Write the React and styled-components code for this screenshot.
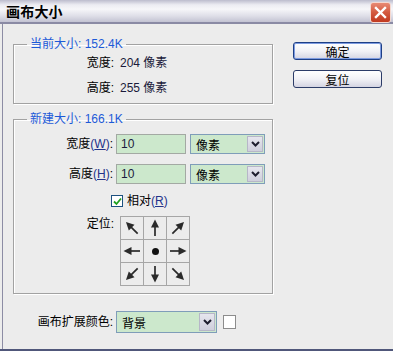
import React from 'react';
import styled, { createGlobalStyle } from 'styled-components';

const Global = createGlobalStyle`
    html, body {
        margin: 0;
        padding: 0;
        background: #ececec;
    }
    body {
        font-family: "Liberation Sans", "Noto Sans CJK SC", sans-serif;
        font-size: 12px;
        color: #000;
    }
`;

function Chevron() {
    return (
        <svg width="9" height="6" viewBox="0 0 9 6">
            <polyline points="1,1 4.5,4.5 8,1" fill="none" stroke="#1e1e2e" strokeWidth="2" />
        </svg>
    );
}

function Select({ width, height, children }) {
    return (
        <SelectBox $width={width} $height={height}>
            <SelectValue>{children}</SelectValue>
            <DropButton><Chevron /></DropButton>
        </SelectBox>
    );
}

function Arrow({ angle }) {
    return (
        <svg width="22" height="22" viewBox="0 0 22 22">
            <g transform={`rotate(${angle} 11 11)`}>
                <line x1="11" y1="19" x2="11" y2="9" stroke="#2a2a2a" strokeWidth="1.7" />
                <polygon points="11,2.5 7,10.5 15,10.5" fill="#2a2a2a" />
            </g>
        </svg>
    );
}

const anchors = [-45, 0, 45, -90, null, 90, -135, 180, 135];

function App() {
    return (
        <>
            <Global />
            <Window>
                <TitleBar>
                    <Title>画布大小</Title>
                    <CloseButton>
                        <svg width="13" height="13" viewBox="0 0 13 13">
                            <path d="M2 2 L11 11 M11 2 L2 11" stroke="#fff" strokeWidth="2.4" strokeLinecap="square" />
                        </svg>
                    </CloseButton>
                </TitleBar>
                <Body>
                    <Main>
                        <Group>
                            <Legend>当前大小: 152.4K</Legend>
                            <Rows $top={5} $gap={11} $bottom={8}>
                                <InfoRow>
                                    <Label>宽度:</Label>
                                    <Value>204 像素</Value>
                                </InfoRow>
                                <InfoRow>
                                    <Label>高度:</Label>
                                    <Value>255 像素</Value>
                                </InfoRow>
                            </Rows>
                        </Group>
                        <Group $gapTop={8}>
                            <Legend>新建大小: 166.1K</Legend>
                            <Rows $top={8} $gap={10} $bottom={7}>
                                <FieldRow>
                                    <Label>宽度<Key>(<u>W</u>)</Key>:</Label>
                                    <Input>10</Input>
                                    <Select width={75} height={20}>像素</Select>
                                </FieldRow>
                                <FieldRow>
                                    <Label>高度<Key>(<u>H</u>)</Key>:</Label>
                                    <Input>10</Input>
                                    <Select width={75} height={20}>像素</Select>
                                </FieldRow>
                                <CheckRow>
                                    <CheckBox>
                                        <svg width="9" height="9" viewBox="0 0 9 9">
                                            <polyline points="1,4.5 3.5,7 8,1.5" fill="none" stroke="#21a121" strokeWidth="1.8" />
                                        </svg>
                                    </CheckBox>
                                    <span>相对<Key>(<u>R</u>)</Key></span>
                                </CheckRow>
                                <AnchorRow>
                                    <Label>定位:</Label>
                                    <AnchorGrid>
                                        {anchors.map((a, i) => (
                                            <Cell key={i}>
                                                {a === null ? <Dot /> : <Arrow angle={a} />}
                                            </Cell>
                                        ))}
                                    </AnchorGrid>
                                </AnchorRow>
                            </Rows>
                        </Group>
                        <ColorRow>
                            <Label>画布扩展颜色:</Label>
                            <Select width={101} height={22}>背景</Select>
                            <Swatch />
                        </ColorRow>
                    </Main>
                    <Side>
                        <Button $default>确定</Button>
                        <Button>复位</Button>
                    </Side>
                </Body>
            </Window>
        </>
    );
}

const Window = styled.div`
    width: 393px;
    height: 351px;
    box-sizing: border-box;
    display: flex;
    flex-direction: column;
    background: #ececec;
    border-bottom: 2px solid #50577a;
    overflow: hidden;
`;
const TitleBar = styled.div`
    height: 22px;
    flex: none;
    display: flex;
    align-items: center;
    justify-content: space-between;
    padding: 0 2px 0 6px;
    background: linear-gradient(to bottom, #bcbccd 0%, #ececf2 22%, #f6f6f9 42%, #dfdfe8 72%, #c3c3d2 100%);
    border-bottom: 2px solid #8a8aa4;
`;
const Title = styled.div`
    font-family: "Noto Sans CJK SC", sans-serif;
    font-weight: 700;
    font-size: 14px;
    letter-spacing: 0.2px;
    line-height: 16px;
`;
const CloseButton = styled.div`
    width: 21px;
    height: 21px;
    margin-top: 2px;
    box-sizing: border-box;
    border: 1px solid #f4d8d0;
    border-radius: 3px;
    background: linear-gradient(to bottom, #e88a74 0%, #d35a40 50%, #c13a20 100%);
    display: flex;
    align-items: center;
    justify-content: center;
`;
const Body = styled.div`
    flex: 1;
    display: flex;
    margin-left: 2px;
    border-left: 1px solid #8c8ca4;
    padding: 13px 0 0 10px;
`;
const Main = styled.div`
    width: 260px;
    display: flex;
    flex-direction: column;
`;
const Group = styled.fieldset`
    margin: ${p => p.$gapTop || 0}px 0 0 0;
    padding: 0;
    min-width: 0;
    border: 1px solid #a2a2a2;
    box-shadow: inset 1px 1px 0 #fff, 1px 1px 0 #fff;
`;
const Legend = styled.legend`
    margin-left: 13px;
    padding: 0 3px;
    color: #1d5ad8;
    line-height: 14px;
    font-size: 12px;
`;
const Rows = styled.div`
    display: flex;
    flex-direction: column;
    gap: ${p => p.$gap}px;
    padding: ${p => p.$top}px 0 ${p => p.$bottom}px 0;
`;
const InfoRow = styled.div`
    display: grid;
    grid-template-columns: 100px auto;
    column-gap: 6px;
    line-height: 14px;
`;
const Label = styled.div`
    text-align: right;
    white-space: nowrap;
    line-height: 14px;
`;
const Key = styled.span`
    color: #23338a;
`;
const Value = styled.div`
    color: #1a1a3a;
`;
const FieldRow = styled.div`
    display: grid;
    grid-template-columns: 99px 70px 75px;
    column-gap: 3px;
    align-items: center;
    & > :last-child {
        margin-left: 1px;
    }
`;
const Input = styled.div`
    height: 20px;
    box-sizing: border-box;
    border: 1px solid #a3a9a3;
    background: #cce8cc;
    padding: 0 4px;
    line-height: 18px;
    color: #1a1a40;
`;
const SelectBox = styled.div`
    width: ${p => p.$width}px;
    height: ${p => p.$height}px;
    box-sizing: border-box;
    border: 1px solid #7f9db9;
    background: #cce8cc;
    display: flex;
    align-items: stretch;
`;
const SelectValue = styled.div`
    flex: 1;
    padding-left: 5px;
    display: flex;
    align-items: center;
    font-family: "Noto Sans CJK SC", sans-serif;
`;
const DropButton = styled.div`
    width: 16px;
    margin: 1px;
    box-sizing: border-box;
    border: 1px solid #b6b6c8;
    background: linear-gradient(to bottom, #e6e6ee 0%, #cfcfdc 100%);
    display: flex;
    align-items: center;
    justify-content: center;
`;
const CheckRow = styled.div`
    display: flex;
    align-items: center;
    gap: 4px;
    padding-left: 97px;
    line-height: 14px;
`;
const CheckBox = styled.div`
    width: 12px;
    height: 12px;
    box-sizing: border-box;
    border: 1px solid #1c5180;
    background: #fff;
    display: flex;
    align-items: center;
    justify-content: center;
`;
const AnchorRow = styled.div`
    display: grid;
    grid-template-columns: 100px auto;
    column-gap: 6px;
    align-items: start;
    margin-top: -2px;
    & > :first-child {
        margin-top: 1px;
    }
`;
const AnchorGrid = styled.div`
    display: grid;
    grid-template-columns: repeat(3, 22px);
    grid-auto-rows: 22px;
    gap: 1px;
    padding: 1px;
    width: max-content;
    background: #a6a6a6;
`;
const Cell = styled.div`
    background: #ececec;
    display: flex;
    align-items: center;
    justify-content: center;
`;
const Dot = styled.div`
    width: 7px;
    height: 7px;
    border-radius: 50%;
    background: #111;
`;
const ColorRow = styled.div`
    display: grid;
    grid-template-columns: 99px auto auto;
    column-gap: 3px;
    align-items: center;
    justify-content: start;
    margin-top: 17px;
    padding-left: 1px;
`;
const Swatch = styled.div`
    width: 13px;
    height: 14px;
    margin-left: 3px;
    box-sizing: border-box;
    border: 1px solid #8c8c8c;
    background: #fff;
`;
const Side = styled.div`
    display: flex;
    flex-direction: column;
    gap: 10px;
    margin-left: 20px;
    padding-top: 5px;
`;
const Button = styled.div`
    width: 89px;
    height: 18px;
    box-sizing: border-box;
    border: 1px solid ${p => (p.$default ? '#1e3f86' : '#2c3c68')};
    box-shadow: ${p => (p.$default ? 'inset 0 0 0 1px #7d9be0' : 'none')};
    border-radius: 3px;
    background: linear-gradient(to bottom, #ffffff 0%, #f2f2f6 50%, #d4d4e2 100%);
    display: flex;
    align-items: center;
    justify-content: center;
    font-family: "Noto Sans CJK SC", sans-serif;
    font-size: 12px;
`;

export default App;
